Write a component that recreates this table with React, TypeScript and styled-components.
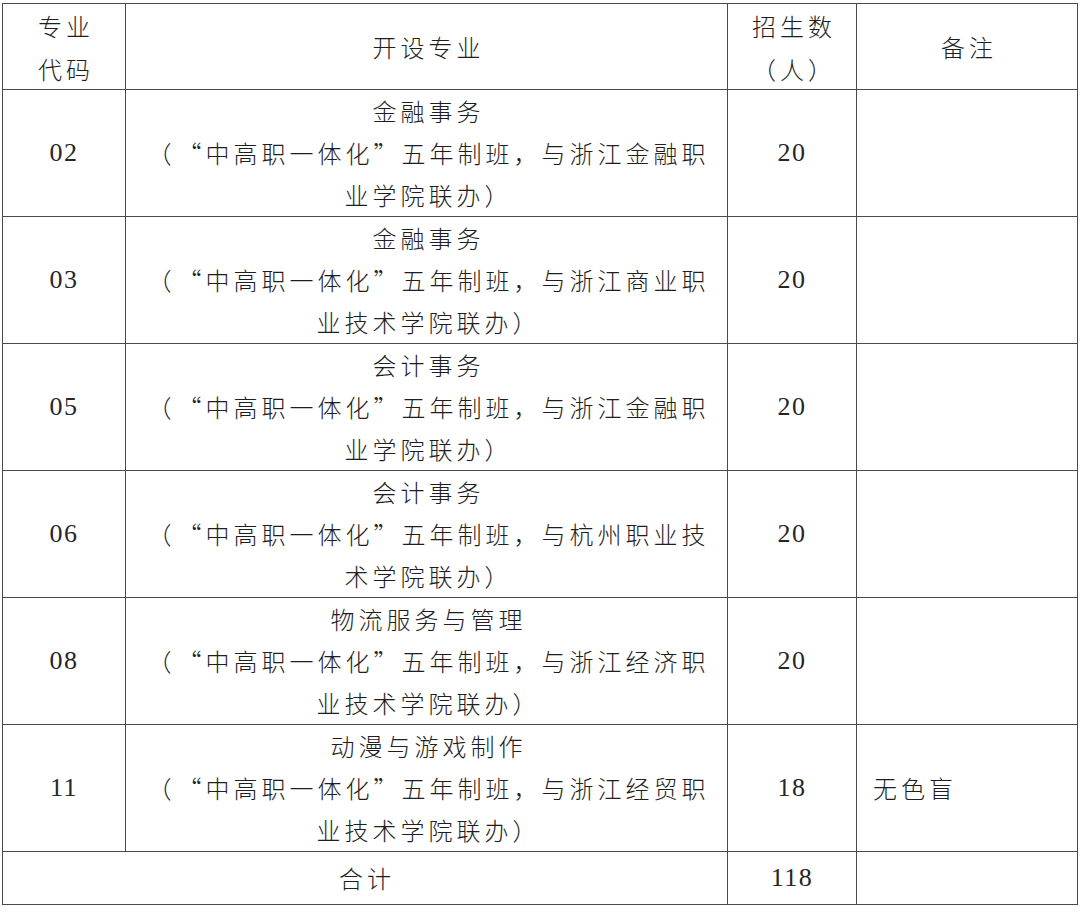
import React from 'react'
import styled, { createGlobalStyle } from 'styled-components'

const GlobalStyle = createGlobalStyle`
  html, body {
    margin: 0;
    padding: 0;
    background: #ffffff;
  }
  body {
    font-family: 'Noto Sans CJK SC', 'Liberation Serif', serif;
    color: #1e1e1e;
  }
`

const Page = styled.div`
  width: 1080px;
  height: 912px;
  padding: 3px 0 0 2px;
  box-sizing: border-box;
  background: #fff;
`

const Table = styled.div`
  display: grid;
  grid-template-columns: 123px 602px 129px 221px;
  grid-template-rows: 86px repeat(6, 127px) 53px;
  border-top: 1.5px solid #4a4a4a;
  border-left: 1.5px solid #4a4a4a;
  width: fit-content;
`

const Cell = styled.div<{ $span?: number; $align?: 'left' | 'center' }>`
  box-sizing: border-box;
  border-right: 1.5px solid #4a4a4a;
  border-bottom: 1.5px solid #4a4a4a;
  display: flex;
  flex-direction: column;
  justify-content: center;
  align-items: ${(p) => (p.$align === 'left' ? 'flex-start' : 'center')};
  padding-left: ${(p) => (p.$align === 'left' ? '16px' : '0')};
  grid-column: span ${(p) => p.$span ?? 1};
  overflow: hidden;
`

const Line = styled.div`
  font-family: 'Noto Sans CJK SC', sans-serif;
  font-weight: 300;
  font-size: 24px;
  line-height: 42px;
  letter-spacing: 4px;
  white-space: pre;
  font-feature-settings: 'fwid' 1;
  margin-right: -4px;
`

const HeadLine = styled(Line)`
  line-height: 43px;
`

const Paren = styled.span`
  margin-right: 14px;
`

const Num = styled.div`
  font-family: 'Liberation Serif', 'Times New Roman', serif;
  font-size: 26px;
  line-height: 42px;
  letter-spacing: 1.5px;
  color: #262626;
`

type Row = {
  code: string
  name: string
  partner: string
  tail: string
  count: string
  note?: string
}

const rows: Row[] = [
  { code: '02', name: '金融事务', partner: '浙江金融职', tail: '业学院联办）', count: '20' },
  { code: '03', name: '金融事务', partner: '浙江商业职', tail: '业技术学院联办）', count: '20' },
  { code: '05', name: '会计事务', partner: '浙江金融职', tail: '业学院联办）', count: '20' },
  { code: '06', name: '会计事务', partner: '杭州职业技', tail: '术学院联办）', count: '20' },
  { code: '08', name: '物流服务与管理', partner: '浙江经济职', tail: '业技术学院联办）', count: '20' },
  {
    code: '11',
    name: '动漫与游戏制作',
    partner: '浙江经贸职',
    tail: '业技术学院联办）',
    count: '18',
    note: '无色盲',
  },
]

export default function App() {
  return (
    <>
      <GlobalStyle />
      <Page>
        <Table>
          <Cell>
            <HeadLine>专业</HeadLine>
            <HeadLine>代码</HeadLine>
          </Cell>
          <Cell>
            <HeadLine>开设专业</HeadLine>
          </Cell>
          <Cell>
            <HeadLine>招生数</HeadLine>
            <HeadLine>（人）</HeadLine>
          </Cell>
          <Cell>
            <HeadLine>备注</HeadLine>
          </Cell>

          {rows.map((row) => (
            <React.Fragment key={row.code}>
              <Cell>
                <Num>{row.code}</Num>
              </Cell>
              <Cell>
                <Line>{row.name}</Line>
                <Line>
                  <Paren>（</Paren>“中高职一体化”五年制班，与{row.partner}
                </Line>
                <Line>{row.tail}</Line>
              </Cell>
              <Cell>
                <Num>{row.count}</Num>
              </Cell>
              <Cell $align="left">{row.note && <Line>{row.note}</Line>}</Cell>
            </React.Fragment>
          ))}

          <Cell $span={2}>
            <Line>合计</Line>
          </Cell>
          <Cell>
            <Num>118</Num>
          </Cell>
          <Cell />
        </Table>
      </Page>
    </>
  )
}
